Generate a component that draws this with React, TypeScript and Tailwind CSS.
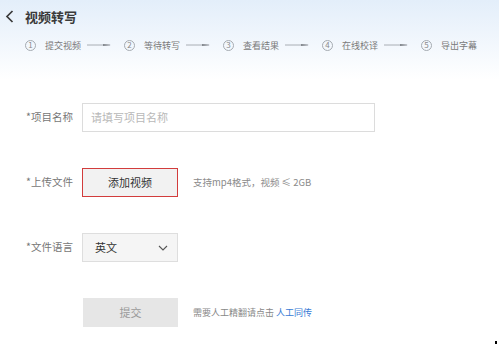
import React from "react";

const font = { fontFamily: '"Noto Sans CJK SC", "Noto Sans", sans-serif' };

function Arrow() {
  return (
    <svg width="24" height="6" viewBox="0 0 24 6" className="block">
      <line x1="0" y1="3" x2="23" y2="3" stroke="#a0a5ab" strokeWidth="0.9" />
      <polygon points="16,1.9 24,3 16,4" fill="#80858b" />
    </svg>
  );
}

const steps = ["提交视频", "等待转写", "查看结果", "在线校译", "导出字幕"];

export default function App() {
  return (
    <div
      className="relative w-[499px] h-[349px] overflow-hidden bg-white text-[#666]"
      style={font}
    >
      <div className="h-[80px] bg-gradient-to-b from-[#e3eefa] to-white">
        <div className="flex items-center h-[32px] pl-[5px] pt-[1px]">
          <svg width="9" height="13" viewBox="0 0 9 13" className="block">
            <polyline
              points="7.5,1 2,6.5 7.5,12"
              fill="none"
              stroke="#3a3a3a"
              strokeWidth="1.7"
            />
          </svg>
          <span className="ml-[11px] text-[13px] font-bold text-[#3a3a3a] leading-none">
            视频转写
          </span>
        </div>
        <div className="flex items-center pl-[25px] mt-[7px] h-[12px]">
          {steps.map((s, i) => (
            <div key={s} className="flex items-center">
              <div className="w-[11px] h-[11px] rounded-full border border-[#a5abb1] flex items-center justify-center text-[8px] leading-none text-[#8a8a8a]">
                {i + 1}
              </div>
              <span className="ml-[9px] text-[9px] leading-none text-[#7a7a7a] whitespace-nowrap">
                {s}
              </span>
              {i < steps.length - 1 && (
                <div className="ml-[6px] mr-[13px]">
                  <Arrow />
                </div>
              )}
            </div>
          ))}
        </div>
      </div>

      <div className="pl-[26px] mt-[23px] flex flex-col gap-[36px]">
        <div className="flex items-center h-[29px]">
          <span className="w-[56px] text-[10.5px] text-[#777] leading-none">*项目名称</span>
          <div className="w-[293px] h-[29px] border border-[#dcdcdc] bg-white flex items-center pl-[8px] text-[11px] text-[#b8b8b8]">
            请填写项目名称
          </div>
        </div>

        <div className="flex items-center h-[29px]">
          <span className="w-[56px] text-[10.5px] text-[#777] leading-none">*上传文件</span>
          <div className="w-[96px] h-[29px] border-[1.5px] border-[#d23c3c] bg-[#f2f2f2] flex items-center justify-center text-[11px] text-[#333]">
            添加视频
          </div>
          <span className="ml-[15px] text-[9.5px] text-[#8a8a8a] leading-none">
            支持mp4格式，视频 ≤ 2GB
          </span>
        </div>

        <div className="flex items-center h-[29px]">
          <span className="w-[56px] text-[10.5px] text-[#777] leading-none">*文件语言</span>
          <div className="w-[96px] h-[29px] border border-[#dedede] bg-[#f5f5f5] flex items-center justify-between pl-[12px] pr-[9px] text-[11px] text-[#333]">
            <span>英文</span>
            <svg width="10" height="6" viewBox="0 0 10 6" className="block">
              <polyline points="1,1 5,5 9,1" fill="none" stroke="#555" strokeWidth="1.1" />
            </svg>
          </div>
        </div>

        <div className="flex items-center h-[29px]">
          <span className="w-[57px]"></span>
          <div className="w-[95px] h-[29px] bg-[#e6e6e6] flex items-center justify-center text-[11px] text-[#999]">
            提交
          </div>
          <span className="ml-[15px] text-[9px] text-[#888] leading-none whitespace-nowrap">
            需要人工精翻请点击 <span className="text-[#3a7bd5]">人工同传</span>
          </span>
        </div>
      </div>

      <div className="absolute left-[495px] top-[341px] w-[2px] h-[3px] bg-black" />
    </div>
  );
}
